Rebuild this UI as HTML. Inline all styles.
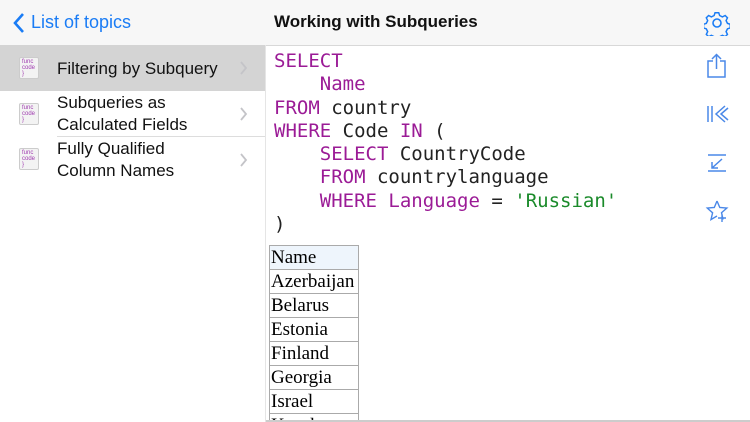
<!DOCTYPE html><html><head><style>
html,body{margin:0;width:750px;height:422px;overflow:hidden}
body{background:#fff;font-family:"Liberation Sans",sans-serif;position:relative}
.hdr{position:absolute;left:0;top:0;width:750px;height:45px;background:#f7f7f7;border-bottom:1px solid #d8d8d8}
.abs{position:absolute}
.row{position:absolute;left:0;width:265px;height:46px}
.row .t{position:absolute;left:57px;font-size:17px;color:#111;line-height:22px}
.ic{position:absolute;left:19px;width:20px;height:22px;background:#f3f3f3;border:1px solid #ccc;border-radius:2px;font:6px/6px "Liberation Sans";color:#a03cb0;padding:1px 0 0 2px;box-sizing:border-box}
.code{position:absolute;left:274px;top:50px;font:19px/23.3px "DejaVu Sans Mono",monospace;color:#222;white-space:pre}
.k{color:#9b1b96}.s{color:#1a8a2a}
.clip{position:absolute;left:266px;top:240px;width:484px;height:180px;overflow:hidden}
table{position:absolute;left:3px;top:5px;border-collapse:collapse;font:19px "Liberation Serif",serif}
td{border:1px solid #aaa;height:23px;padding:0 1px;line-height:22px;width:86px}
svg{position:absolute}
</style></head><body>
<div class="hdr"></div>
<svg style="left:12px;top:12px" width="14" height="22"><path d="M11 2 L3 11 L11 20" stroke="#1a7cf5" stroke-width="2.6" fill="none"/></svg>
<div class="abs" style="left:31px;top:12px;font-size:18px;color:#1a7cf5">List of topics</div>
<div class="abs" style="left:274px;top:12px;font-size:17px;font-weight:bold;color:#111">Working with Subqueries</div>
<svg style="left:704px;top:10px" width="26" height="26" viewBox="0 0 26 26"><path d="M11 2h4l1 3 3 1.5 3-1.5 2.5 2.5-1.5 3 1.5 3 3 1v4l-3 1-1.5 3 1.5 3-2.5 2.5-3-1.5-3 1.5-1 3h-4l-1-3-3-1.5-3 1.5-2.5-2.5 1.5-3-1.5-3-3-1v-4l3-1 1.5-3-1.5-3 2.5-2.5 3 1.5 3-1.5z" transform="scale(0.92) translate(1,1)" fill="none" stroke="#1a7cf5" stroke-width="1.6"/><circle cx="13" cy="13" r="4" fill="none" stroke="#1a7cf5" stroke-width="1.6"/></svg>
<div class="abs" style="left:0;top:45px;width:265px;height:46px;background:#d4d4d4"></div>
<div class="abs" style="left:57px;top:136px;width:208px;height:1px;background:#ddd"></div>
<div class="abs" style="left:265px;top:45px;width:1px;height:377px;background:#e5e5e5"></div>
<div class="row" style="top:45px"><div class="ic" style="top:12px">func<br>code<br>}</div><div class="t" style="top:13px">Filtering by Subquery</div></div>
<div class="row" style="top:91px"><div class="ic" style="top:12px">func<br>code<br>}</div><div class="t" style="top:1px">Subqueries as<br>Calculated Fields</div></div>
<div class="row" style="top:137px"><div class="ic" style="top:11px">func<br>code<br>}</div><div class="t" style="top:1px">Fully Qualified<br>Column Names</div></div>
<svg style="left:239px;top:61px" width="10" height="120"><g fill="none" stroke="#c4c4c8" stroke-width="1.8"><path d="M2 1l5 6-5 6"/><path d="M2 47l5 6-5 6"/><path d="M2 93l5 6-5 6"/></g></svg>
<div class="code"><span class="k">SELECT</span>
    <span class="k">Name</span>
<span class="k">FROM</span> country
<span class="k">WHERE</span> Code <span class="k">IN</span> (
    <span class="k">SELECT</span> CountryCode
    <span class="k">FROM</span> countrylanguage
    <span class="k">WHERE</span> <span class="k">Language</span> = <span class="s">'Russian'</span>
)</div>
<div class="clip"><table>
<tr><td style="background:#eef5fc">Name</td></tr>
<tr><td>Azerbaijan</td></tr><tr><td>Belarus</td></tr><tr><td>Estonia</td></tr><tr><td>Finland</td></tr><tr><td>Georgia</td></tr><tr><td>Israel</td></tr><tr><td>Kazakstan</td></tr>
</table></div>
<div class="abs" style="left:266px;top:420px;width:484px;height:2px;background:#ccc"></div>
<svg style="left:705px;top:53px" width="24" height="26" viewBox="0 0 24 26"><path d="M8 8H3v16h17V8h-5M11.5 16V2M7 6l4.5-4.5L16 6" fill="none" stroke="#4a88e8" stroke-width="1.5"/></svg>
<svg style="left:705px;top:104px" width="24" height="20" viewBox="0 0 24 20"><path d="M3 2v16M7 2v16M20 2L11 10l9 8M23 4l-7 6 7 6" fill="none" stroke="#4a88e8" stroke-width="1.5"/></svg>
<svg style="left:705px;top:152px" width="24" height="22" viewBox="0 0 24 22"><path d="M3 3h18M3 19h18M17 7L7 16M7 10v6h6" fill="none" stroke="#4a88e8" stroke-width="1.5"/></svg>
<svg style="left:705px;top:199px" width="24" height="24" viewBox="0 0 24 24"><path d="M12 2l2.8 6.5 7 .6-5.3 4.6 1.6 6.8M12 17l-6 3.6 1.6-6.8L2.3 9.1l7-.6L12 2M17 15v8M13 19h8" fill="none" stroke="#4a88e8" stroke-width="1.4"/></svg>
</body></html>
